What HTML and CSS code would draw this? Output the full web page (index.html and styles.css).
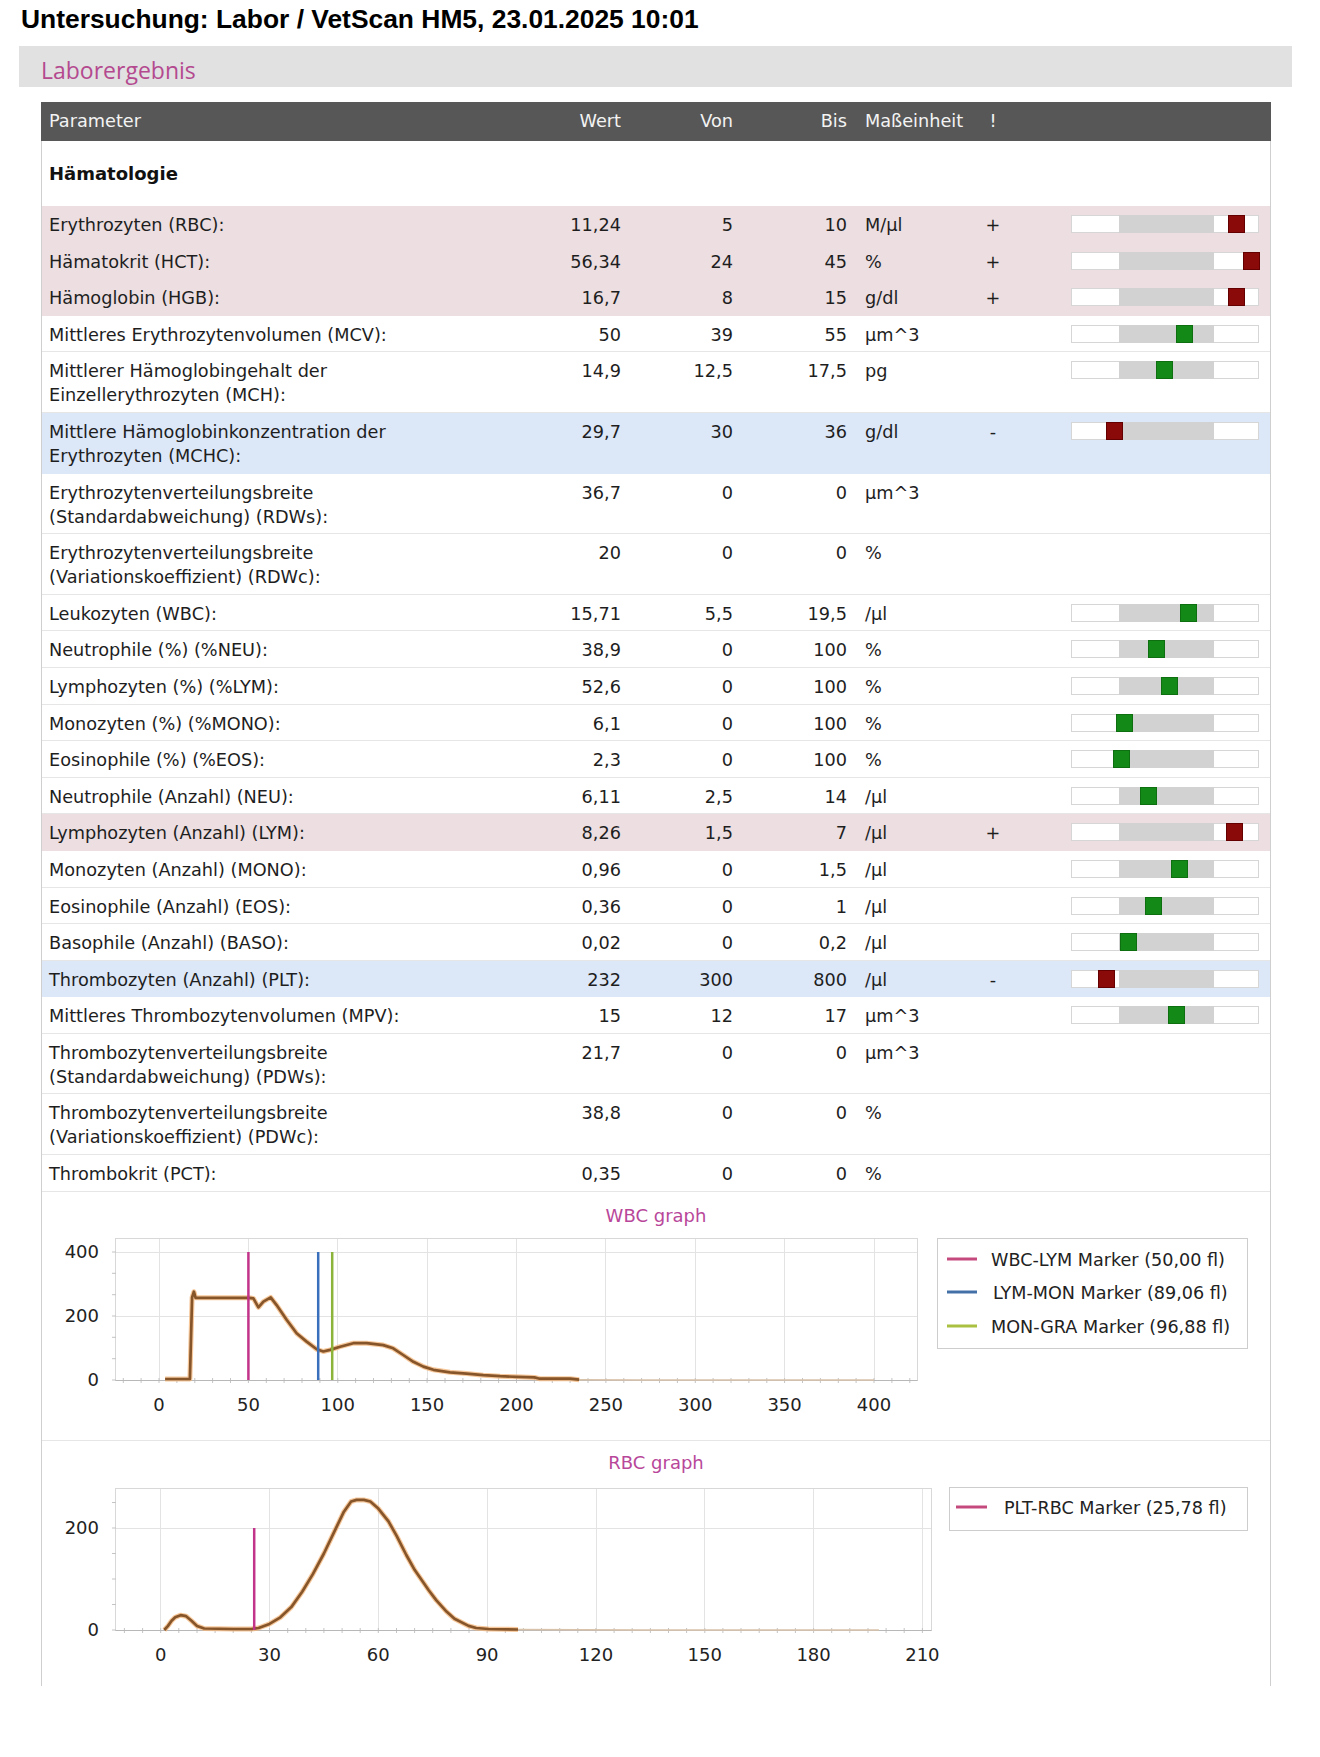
FILE: index.html
```html
<!DOCTYPE html>
<html lang="de">
<head>
<meta charset="utf-8">
<title>Laborergebnis</title>
<link rel="stylesheet" href="styles.css">
</head>
<body>
<h1 class="exam-title">Untersuchung: Labor / VetScan HM5, 23.01.2025 10:01</h1>
<div class="panel-head">Laborergebnis</div>
<div class="report">
  <div class="row head">
    <div class="c-param">Parameter</div><div class="c-num">Wert</div><div class="c-num">Von</div><div class="c-num">Bis</div><div class="c-unit">Maßeinheit</div><div class="c-flag">!</div>
  </div>
  <div class="group">Hämatologie</div>

  <div class="row high"><div class="c-param">Erythrozyten (RBC):</div><div class="c-num">11,24</div><div class="c-num">5</div><div class="c-num">10</div><div class="c-unit">M/µl</div><div class="c-flag">+</div><div class="c-bar"><div class="range"><span class="lo"></span><span class="mid"></span><span class="hi"></span><i class="mark bad" style="left:157px"></i></div></div></div>
  <div class="row high"><div class="c-param">Hämatokrit (HCT):</div><div class="c-num">56,34</div><div class="c-num">24</div><div class="c-num">45</div><div class="c-unit">%</div><div class="c-flag">+</div><div class="c-bar"><div class="range"><span class="lo"></span><span class="mid"></span><span class="hi"></span><i class="mark bad" style="left:172px"></i></div></div></div>
  <div class="row high"><div class="c-param">Hämoglobin (HGB):</div><div class="c-num">16,7</div><div class="c-num">8</div><div class="c-num">15</div><div class="c-unit">g/dl</div><div class="c-flag">+</div><div class="c-bar"><div class="range"><span class="lo"></span><span class="mid"></span><span class="hi"></span><i class="mark bad" style="left:157px"></i></div></div></div>
  <div class="row"><div class="c-param">Mittleres Erythrozytenvolumen (MCV):</div><div class="c-num">50</div><div class="c-num">39</div><div class="c-num">55</div><div class="c-unit">µm^3</div><div class="c-bar"><div class="range"><span class="lo"></span><span class="mid"></span><span class="hi"></span><i class="mark ok" style="left:104.8px"></i></div></div></div>
  <div class="row"><div class="c-param">Mittlerer Hämoglobingehalt der<br>Einzellerythrozyten (MCH):</div><div class="c-num">14,9</div><div class="c-num">12,5</div><div class="c-num">17,5</div><div class="c-unit">pg</div><div class="c-bar"><div class="range"><span class="lo"></span><span class="mid"></span><span class="hi"></span><i class="mark ok" style="left:85.1px"></i></div></div></div>
  <div class="row low"><div class="c-param">Mittlere Hämoglobinkonzentration der<br>Erythrozyten (MCHC):</div><div class="c-num">29,7</div><div class="c-num">30</div><div class="c-num">36</div><div class="c-unit">g/dl</div><div class="c-flag">-</div><div class="c-bar"><div class="range"><span class="lo"></span><span class="mid"></span><span class="hi"></span><i class="mark bad" style="left:34.8px"></i></div></div></div>
  <div class="row"><div class="c-param">Erythrozytenverteilungsbreite<br>(Standardabweichung) (RDWs):</div><div class="c-num">36,7</div><div class="c-num">0</div><div class="c-num">0</div><div class="c-unit">µm^3</div></div>
  <div class="row"><div class="c-param">Erythrozytenverteilungsbreite<br>(Variationskoeffizient) (RDWc):</div><div class="c-num">20</div><div class="c-num">0</div><div class="c-num">0</div><div class="c-unit">%</div></div>
  <div class="row"><div class="c-param">Leukozyten (WBC):</div><div class="c-num">15,71</div><div class="c-num">5,5</div><div class="c-num">19,5</div><div class="c-unit">/µl</div><div class="c-bar"><div class="range"><span class="lo"></span><span class="mid"></span><span class="hi"></span><i class="mark ok" style="left:108.8px"></i></div></div></div>
  <div class="row"><div class="c-param">Neutrophile (%) (%NEU):</div><div class="c-num">38,9</div><div class="c-num">0</div><div class="c-num">100</div><div class="c-unit">%</div><div class="c-bar"><div class="range"><span class="lo"></span><span class="mid"></span><span class="hi"></span><i class="mark ok" style="left:76.5px"></i></div></div></div>
  <div class="row"><div class="c-param">Lymphozyten (%) (%LYM):</div><div class="c-num">52,6</div><div class="c-num">0</div><div class="c-num">100</div><div class="c-unit">%</div><div class="c-bar"><div class="range"><span class="lo"></span><span class="mid"></span><span class="hi"></span><i class="mark ok" style="left:89.5px"></i></div></div></div>
  <div class="row"><div class="c-param">Monozyten (%) (%MONO):</div><div class="c-num">6,1</div><div class="c-num">0</div><div class="c-num">100</div><div class="c-unit">%</div><div class="c-bar"><div class="range"><span class="lo"></span><span class="mid"></span><span class="hi"></span><i class="mark ok" style="left:45.3px"></i></div></div></div>
  <div class="row"><div class="c-param">Eosinophile (%) (%EOS):</div><div class="c-num">2,3</div><div class="c-num">0</div><div class="c-num">100</div><div class="c-unit">%</div><div class="c-bar"><div class="range"><span class="lo"></span><span class="mid"></span><span class="hi"></span><i class="mark ok" style="left:41.7px"></i></div></div></div>
  <div class="row"><div class="c-param">Neutrophile (Anzahl) (NEU):</div><div class="c-num">6,11</div><div class="c-num">2,5</div><div class="c-num">14</div><div class="c-unit">/µl</div><div class="c-bar"><div class="range"><span class="lo"></span><span class="mid"></span><span class="hi"></span><i class="mark ok" style="left:69.3px"></i></div></div></div>
  <div class="row high"><div class="c-param">Lymphozyten (Anzahl) (LYM):</div><div class="c-num">8,26</div><div class="c-num">1,5</div><div class="c-num">7</div><div class="c-unit">/µl</div><div class="c-flag">+</div><div class="c-bar"><div class="range"><span class="lo"></span><span class="mid"></span><span class="hi"></span><i class="mark bad" style="left:155px"></i></div></div></div>
  <div class="row"><div class="c-param">Monozyten (Anzahl) (MONO):</div><div class="c-num">0,96</div><div class="c-num">0</div><div class="c-num">1,5</div><div class="c-unit">/µl</div><div class="c-bar"><div class="range"><span class="lo"></span><span class="mid"></span><span class="hi"></span><i class="mark ok" style="left:100.3px"></i></div></div></div>
  <div class="row"><div class="c-param">Eosinophile (Anzahl) (EOS):</div><div class="c-num">0,36</div><div class="c-num">0</div><div class="c-num">1</div><div class="c-unit">/µl</div><div class="c-bar"><div class="range"><span class="lo"></span><span class="mid"></span><span class="hi"></span><i class="mark ok" style="left:73.7px"></i></div></div></div>
  <div class="row"><div class="c-param">Basophile (Anzahl) (BASO):</div><div class="c-num">0,02</div><div class="c-num">0</div><div class="c-num">0,2</div><div class="c-unit">/µl</div><div class="c-bar"><div class="range"><span class="lo"></span><span class="mid"></span><span class="hi"></span><i class="mark ok" style="left:49px"></i></div></div></div>
  <div class="row low"><div class="c-param">Thrombozyten (Anzahl) (PLT):</div><div class="c-num">232</div><div class="c-num">300</div><div class="c-num">800</div><div class="c-unit">/µl</div><div class="c-flag">-</div><div class="c-bar"><div class="range"><span class="lo"></span><span class="mid"></span><span class="hi"></span><i class="mark bad" style="left:26.6px"></i></div></div></div>
  <div class="row"><div class="c-param">Mittleres Thrombozytenvolumen (MPV):</div><div class="c-num">15</div><div class="c-num">12</div><div class="c-num">17</div><div class="c-unit">µm^3</div><div class="c-bar"><div class="range"><span class="lo"></span><span class="mid"></span><span class="hi"></span><i class="mark ok" style="left:96.5px"></i></div></div></div>
  <div class="row"><div class="c-param">Thrombozytenverteilungsbreite<br>(Standardabweichung) (PDWs):</div><div class="c-num">21,7</div><div class="c-num">0</div><div class="c-num">0</div><div class="c-unit">µm^3</div></div>
  <div class="row"><div class="c-param">Thrombozytenverteilungsbreite<br>(Variationskoeffizient) (PDWc):</div><div class="c-num">38,8</div><div class="c-num">0</div><div class="c-num">0</div><div class="c-unit">%</div></div>
  <div class="row"><div class="c-param">Thrombokrit (PCT):</div><div class="c-num">0,35</div><div class="c-num">0</div><div class="c-num">0</div><div class="c-unit">%</div></div>

  <div class="graph wbc">
    <div class="graph-title">WBC graph</div>
    <svg class="chart" width="1228" height="204" viewBox="0 0 1228 204">
      <rect x="73.5" y="2.5" width="802" height="142" fill="#fff" stroke="#d8d8d8"/>
      <path class="grid" d="M117.5 3V144M206.5 3V144M295.5 3V144M385.5 3V144M474.5 3V144M563.5 3V144M653.5 3V144M742.5 3V144M832.5 3V144M74 16.5H875M74 80.5H875"/>
      <path class="ticks" d="M70 144h4M70 122.7h4M70 101.3h4M70 80h4M70 58.7h4M70 37.3h4M70 16h4"/>
      <path class="ticks" d="M81.3 142v5M99.1 142v5M117 142v5M134.9 142v5M152.8 142v5M170.6 142v5M188.5 142v5M206.4 142v5M224.3 142v5M242.1 142v5M260 142v5M277.9 142v5M295.8 142v5M313.6 142v5M331.5 142v5M349.4 142v5M367.3 142v5M385.1 142v5M403 142v5M420.9 142v5M438.8 142v5M456.6 142v5M474.5 142v5M492.4 142v5M510.3 142v5M528.1 142v5M546 142v5M563.9 142v5M581.8 142v5M599.6 142v5M617.5 142v5M635.4 142v5M653.3 142v5M671.1 142v5M689 142v5M706.9 142v5M724.8 142v5M742.6 142v5M760.5 142v5M778.4 142v5M796.3 142v5M814.1 142v5M832 142v5M849.9 142v5M867.8 142v5"/>
      <line class="axis" x1="73.5" y1="144.5" x2="875.5" y2="144.5"/>
      <text class="lbl" x="57" y="22" text-anchor="end">400</text>
      <text class="lbl" x="57" y="86" text-anchor="end">200</text>
      <text class="lbl" x="57" y="150" text-anchor="end">0</text>
      <text class="lbl" x="117" y="175" text-anchor="middle">0</text>
      <text class="lbl" x="206.4" y="175" text-anchor="middle">50</text>
      <text class="lbl" x="295.8" y="175" text-anchor="middle">100</text>
      <text class="lbl" x="385.1" y="175" text-anchor="middle">150</text>
      <text class="lbl" x="474.5" y="175" text-anchor="middle">200</text>
      <text class="lbl" x="563.9" y="175" text-anchor="middle">250</text>
      <text class="lbl" x="653.3" y="175" text-anchor="middle">300</text>
      <text class="lbl" x="742.6" y="175" text-anchor="middle">350</text>
      <text class="lbl" x="832" y="175" text-anchor="middle">400</text>
      <polyline class="tail" points="537,143.7 600,144 700,144 832,144"/>
      <polyline class="curve-glow" points="123.1,143 147.9,143 150.1,61.4 151.9,55.7 153.6,61.8 206.9,61.8 211.4,62.4 216.4,71.4 221.4,65.6 228.7,61.4 234.6,69.1 244.6,83.8 254.6,97.3 264.6,105.6 274.7,113.3 281.3,115.5 288.1,113.9 298.1,110.7 311.3,107.2 324.7,107.2 341.3,109.1 351.2,112.3 361.2,119 371.4,125.8 381.4,130.6 391.4,133.8 408,136.3 424.6,137.6 441.3,139.2 458.1,140.2 474.5,140.8 492.4,141.4 497.7,142.7 528.1,142.7 537.1,143.7"/>
      <polyline class="curve" points="123.1,143 147.9,143 150.1,61.4 151.9,55.7 153.6,61.8 206.9,61.8 211.4,62.4 216.4,71.4 221.4,65.6 228.7,61.4 234.6,69.1 244.6,83.8 254.6,97.3 264.6,105.6 274.7,113.3 281.3,115.5 288.1,113.9 298.1,110.7 311.3,107.2 324.7,107.2 341.3,109.1 351.2,112.3 361.2,119 371.4,125.8 381.4,130.6 391.4,133.8 408,136.3 424.6,137.6 441.3,139.2 458.1,140.2 474.5,140.8 492.4,141.4 497.7,142.7 528.1,142.7 537.1,143.7"/>
      <line class="m-lym" x1="206.4" y1="16" x2="206.4" y2="144"/>
      <line class="m-mon" x1="276.2" y1="16" x2="276.2" y2="144"/>
      <line class="m-gra" x1="290.2" y1="16" x2="290.2" y2="144"/>
      <rect class="legend" x="895.5" y="2.5" width="310" height="110"/>
      <line class="sw-lym" x1="905" y1="23" x2="935" y2="23"/>
      <text class="lbl leg" x="949" y="29.5">WBC-LYM Marker (50,00 fl)</text>
      <line class="sw-mon" x1="905" y1="56" x2="935" y2="56"/>
      <text class="lbl leg" x="951" y="62.5">LYM-MON Marker (89,06 fl)</text>
      <line class="sw-gra" x1="905" y1="90" x2="935" y2="90"/>
      <text class="lbl leg" x="949" y="96.5">MON-GRA Marker (96,88 fl)</text>
    </svg>
  </div>

  <div class="graph rbc">
    <div class="graph-title">RBC graph</div>
    <svg class="chart" width="1228" height="201" viewBox="0 0 1228 201">
      <rect x="73.5" y="3.5" width="816" height="142" fill="#fff" stroke="#d8d8d8"/>
      <path class="grid" d="M118.5 4V145M227.5 4V145M336.5 4V145M445.5 4V145M554.5 4V145M662.5 4V145M771.5 4V145M880.5 4V145M74 43.5H889"/>
      <path class="ticks" d="M70 145h4M70 119.5h4M70 94h4M70 68.5h4M70 43h4M70 17.5h4"/>
      <path class="ticks" d="M82.4 143v5M100.6 143v5M118.7 143v5M136.8 143v5M155 143v5M173.1 143v5M191.2 143v5M209.4 143v5M227.5 143v5M245.7 143v5M263.8 143v5M281.9 143v5M300.1 143v5M318.2 143v5M336.3 143v5M354.5 143v5M372.6 143v5M390.7 143v5M408.9 143v5M427 143v5M445.1 143v5M463.3 143v5M481.4 143v5M499.5 143v5M517.7 143v5M535.8 143v5M553.9 143v5M572.1 143v5M590.2 143v5M608.4 143v5M626.5 143v5M644.6 143v5M662.8 143v5M680.9 143v5M699 143v5M717.2 143v5M735.3 143v5M753.4 143v5M771.6 143v5M789.7 143v5M807.8 143v5M826 143v5M844.1 143v5M862.2 143v5M880.4 143v5"/>
      <line class="axis" x1="73.5" y1="145.5" x2="889.5" y2="145.5"/>
      <text class="lbl" x="57" y="49" text-anchor="end">200</text>
      <text class="lbl" x="57" y="151" text-anchor="end">0</text>
      <text class="lbl" x="118.7" y="176" text-anchor="middle">0</text>
      <text class="lbl" x="227.5" y="176" text-anchor="middle">30</text>
      <text class="lbl" x="336.3" y="176" text-anchor="middle">60</text>
      <text class="lbl" x="445.1" y="176" text-anchor="middle">90</text>
      <text class="lbl" x="554" y="176" text-anchor="middle">120</text>
      <text class="lbl" x="662.8" y="176" text-anchor="middle">150</text>
      <text class="lbl" x="771.6" y="176" text-anchor="middle">180</text>
      <text class="lbl" x="880.4" y="176" text-anchor="middle">210</text>
      <polyline class="tail" points="476,144.5 600,145 700,145 836.9,145"/>
      <polyline class="curve-glow" points="122.3,145 126,140.9 129.6,135.8 133.2,132.3 138.6,130.2 144.1,131.2 149.5,135.8 155,140.9 162.2,143.5 191.2,144 209.4,144 216.6,143 227.5,138.9 238.4,132.3 249.3,122.1 260.2,106.8 271,88.9 281.9,68.5 292.8,45.6 301.9,26.7 309.1,16.5 314.6,14.9 321.8,14.9 328.3,16.5 336.3,23.6 346.5,36.4 354.5,50.7 364.3,70 372.6,84.8 386.7,105.2 394.4,115.4 404.5,126.6 412.5,133.8 426.6,140.9 434.2,143 446.6,144 476,144.5"/>
      <polyline class="curve" points="122.3,145 126,140.9 129.6,135.8 133.2,132.3 138.6,130.2 144.1,131.2 149.5,135.8 155,140.9 162.2,143.5 191.2,144 209.4,144 216.6,143 227.5,138.9 238.4,132.3 249.3,122.1 260.2,106.8 271,88.9 281.9,68.5 292.8,45.6 301.9,26.7 309.1,16.5 314.6,14.9 321.8,14.9 328.3,16.5 336.3,23.6 346.5,36.4 354.5,50.7 364.3,70 372.6,84.8 386.7,105.2 394.4,115.4 404.5,126.6 412.5,133.8 426.6,140.9 434.2,143 446.6,144 476,144.5"/>
      <line class="m-lym" x1="212.2" y1="43" x2="212.2" y2="145"/>
      <rect class="legend" x="907.5" y="2.5" width="298" height="43"/>
      <line class="sw-lym" x1="914" y1="22" x2="945" y2="22"/>
      <text class="lbl leg" x="962" y="28.5">PLT-RBC Marker (25,78 fl)</text>
    </svg>
  </div>
</div>
</body>
</html>
```

FILE: styles.css
```css
* { box-sizing: border-box; }

html, body {
  margin: 0;
  padding: 0;
  background: #ffffff;
}

body {
  width: 1320px;
  font-family: "DejaVu Sans", Verdana, sans-serif;
  color: #1e1e1e;
}

.exam-title {
  margin: 0;
  height: 46px;
  padding: 4px 0 0 21px;
  font-family: "Liberation Sans", Arial, sans-serif;
  font-weight: 700;
  font-size: 26.4px;
  line-height: 30px;
  color: #000;
}

.panel-head {
  margin-left: 19px;
  width: 1273px;
  height: 41px;
  padding: 7px 0 0 22px;
  background: #e1e1e1;
  font-family: "Open Sans", "DejaVu Sans", sans-serif;
  font-size: 23px;
  line-height: 34px;
  color: #b4498f;
}

.report {
  margin: 15px 0 0 41px;
  width: 1230px;
  border-left: 1px solid #cfcfcf;
  border-right: 1px solid #cfcfcf;
}

.row {
  display: grid;
  grid-template-columns: 481px 91px 112px 114px 128px 36px 60px 188px;
  padding: 7px 11px 4.6px 7px;
  font-size: 17.7px;
  line-height: 24px;
  border-bottom: 1px solid #e6e6e6;
  white-space: nowrap;
}

.row.head {
  margin: 0 -1px;
  padding: 0 12px 0 8px;
  height: 39px;
  line-height: 39px;
  font-size: 17.7px;
  background: #575757;
  color: #f3f3f3;
  border-bottom: none;
}

.row.high {
  background: #ecdee1;
  border-bottom-color: #ecdee1;
}

.row.low {
  background: #dce7f8;
  border-bottom-color: #dce7f8;
}

.c-num { text-align: right; }
.c-unit { padding-left: 18px; }
.c-flag { text-align: center; }
.c-bar { grid-column: 8; }

.group {
  padding: 20.5px 7px 20.5px;
  font-size: 18px;
  line-height: 24px;
  font-weight: 700;
  color: #111;
}

.range {
  position: relative;
  display: flex;
  height: 18px;
  margin-top: 2px;
}

.range .lo {
  width: 48px;
  background: #fff;
  border: 1px solid #d6d6d6;
  border-right: none;
}

.range .mid {
  width: 95px;
  background: #d2d2d2;
}

.range .hi {
  width: 45px;
  background: #fff;
  border: 1px solid #d6d6d6;
  border-left: none;
}

.mark {
  position: absolute;
  top: 0;
  width: 17px;
  height: 18px;
}

.mark.ok {
  background: #138a17;
  border: 1px solid #0d6f10;
}

.mark.bad {
  background: #8a0a0a;
  border: 1px solid #640000;
}

.graph {
  border-bottom: 1px solid #e6e6e6;
}

.graph.rbc { border-bottom: none; }

.graph-title {
  height: 44px;
  padding-top: 12px;
  text-align: center;
  font-size: 18px;
  line-height: 24px;
  color: #b8479a;
}

.graph.rbc .graph-title { padding-top: 10px; }

.chart { display: block; }

.chart .lbl {
  font-family: "DejaVu Sans", Verdana, sans-serif;
  font-size: 18px;
  fill: #222;
}

.chart .leg { font-size: 17.6px; }

.chart .grid {
  fill: none;
  stroke: #e3e3e3;
  stroke-width: 1;
}

.chart .ticks {
  fill: none;
  stroke: #c4c4c4;
  stroke-width: 1;
}

.chart .axis {
  stroke: #b8b8b8;
  stroke-width: 1;
}

.chart .curve-glow {
  fill: none;
  stroke: #f2b070;
  stroke-width: 5;
  stroke-linejoin: round;
  opacity: 0.7;
}

.chart .curve {
  fill: none;
  stroke: #87552a;
  stroke-width: 2.7;
  stroke-linejoin: round;
}

.chart .tail {
  fill: none;
  stroke: #d9c2aa;
  stroke-width: 1.5;
}

.chart .m-lym { stroke: #c2338a; stroke-width: 2.5; }
.chart .m-mon { stroke: #3a6fbb; stroke-width: 2.5; }
.chart .m-gra { stroke: #8cb43a; stroke-width: 2.5; }

.chart .legend {
  fill: #fff;
  stroke: #cdcdcd;
  stroke-width: 1;
}

.chart .sw-lym { stroke: #c4497c; stroke-width: 3; }
.chart .sw-mon { stroke: #4470a8; stroke-width: 3; }
.chart .sw-gra { stroke: #a9c040; stroke-width: 3; }
```
